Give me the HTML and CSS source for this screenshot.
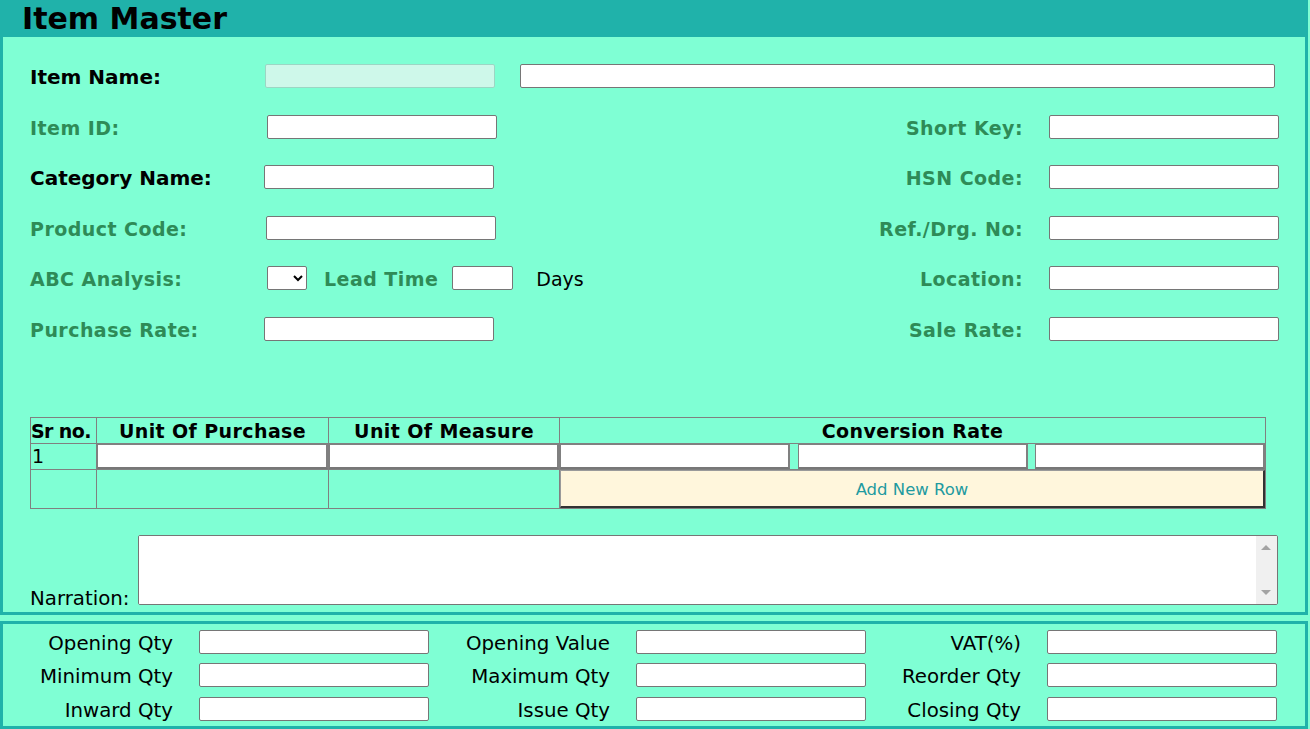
FILE: index.html
```html
<!DOCTYPE html>
<html>
<head>
<meta charset="utf-8">
<title>Item Master</title>
<link rel="stylesheet" href="styles.css">
</head>
<body>
<div class="header"><h1 class="title">Item Master</h1></div>
<div class="panel main-panel">
  <div class="form-grid">
    <label class="lbl lbl-black">Item Name:</label>
    <input class="inp inp-disabled" type="text" disabled>
    <input class="inp inp-wide" type="text">

    <label class="lbl lbl-green">Item ID:</label>
    <input class="inp shift-2" type="text">
    <label class="lbl lbl-green lbl-right">Short Key:</label>
    <input class="inp" type="text">

    <label class="lbl lbl-black">Category Name:</label>
    <input class="inp shift-n1" type="text">
    <label class="lbl lbl-green lbl-right">HSN Code:</label>
    <input class="inp" type="text">

    <label class="lbl lbl-green">Product Code:</label>
    <input class="inp shift-1" type="text">
    <label class="lbl lbl-green lbl-right">Ref./Drg. No:</label>
    <input class="inp" type="text">

    <label class="lbl lbl-green">ABC Analysis:</label>
    <div class="lead-group">
      <select class="sel"><option></option></select>
      <span class="lbl lbl-green lead-lbl">Lead Time</span>
      <input class="inp inp-short" type="text">
      <span class="days">Days</span>
    </div>
    <label class="lbl lbl-green lbl-right">Location:</label>
    <input class="inp" type="text">

    <label class="lbl lbl-green">Purchase Rate:</label>
    <input class="inp shift-n1" type="text">
    <label class="lbl lbl-green lbl-right">Sale Rate:</label>
    <input class="inp" type="text">
  </div>

  <table class="units">
    <colgroup>
      <col class="c-sr"><col class="c-uop"><col class="c-uom"><col class="c-conv">
    </colgroup>
    <thead>
      <tr class="head-row">
        <th>Sr no.</th>
        <th>Unit Of Purchase</th>
        <th>Unit Of Measure</th>
        <th>Conversion Rate</th>
      </tr>
    </thead>
    <tbody>
      <tr class="data-row">
        <td class="sr">1</td>
        <td><input class="cell-inp" type="text"></td>
        <td><input class="cell-inp" type="text"></td>
        <td>
          <div class="conv-inputs">
            <input class="cell-inp conv" type="text">
            <input class="cell-inp conv" type="text">
            <input class="cell-inp conv" type="text">
          </div>
        </td>
      </tr>
      <tr class="btn-row">
        <td></td>
        <td></td>
        <td></td>
        <td class="btn-cell"><button class="add-btn" type="button">Add New Row</button></td>
      </tr>
    </tbody>
  </table>

  <div class="narration">
    <label class="narr-lbl">Narration:</label>
    <div class="narr-box">
      <textarea class="narr-text"></textarea>
      <div class="scrollbar">
        <span class="arrow arrow-up"></span>
        <span class="arrow arrow-down"></span>
      </div>
    </div>
  </div>
</div>

<div class="panel bottom-panel">
  <div class="qty-grid">
    <label class="qlbl">Opening Qty</label><input class="inp" type="text">
    <label class="qlbl">Opening Value</label><input class="inp" type="text">
    <label class="qlbl">VAT(%)</label><input class="inp" type="text">

    <label class="qlbl">Minimum Qty</label><input class="inp" type="text">
    <label class="qlbl">Maximum Qty</label><input class="inp" type="text">
    <label class="qlbl">Reorder Qty</label><input class="inp" type="text">

    <label class="qlbl">Inward Qty</label><input class="inp" type="text">
    <label class="qlbl">Issue Qty</label><input class="inp" type="text">
    <label class="qlbl">Closing Qty</label><input class="inp" type="text">
  </div>
</div>
</body>
</html>
```
FILE: styles.css
```css
* { box-sizing: border-box; }

html, body {
  margin: 0;
  padding: 0;
  background: #7FFFD4;
  font-family: "DejaVu Sans", Verdana, sans-serif;
  color: #000;
}

body { width: 1308px; }

.header {
  background: #20B2AA;
  height: 37px;
  padding-left: 22px;
  display: flex;
  align-items: center;
}

.title {
  margin: 0;
  font-size: 30px;
  font-weight: bold;
  line-height: 1;
}

.panel {
  background: #7FFFD4;
  border: 3px solid #20B2AA;
}

.main-panel {
  border-top: none;
  padding: 27px 26px 7px 27px;
}

.form-grid {
  display: grid;
  grid-template-columns: 235px 230px 1fr 230px;
  grid-template-rows: repeat(6, 24px);
  row-gap: 26.6px;
  align-items: center;
}

.lbl {
  font-weight: bold;
  white-space: nowrap;
  line-height: 24px;
  padding-top: 2px;
}

.lbl-black {
  color: #000;
  font-size: 20px;
}

.lbl-green {
  color: #2E8B57;
  font-size: 19px;
  letter-spacing: 0.45px;
}

.lbl-right {
  justify-self: end;
  padding-right: 26px;
}

.inp {
  height: 24px;
  width: 230px;
  border: 1px solid #767676;
  border-radius: 2px;
  background: #fff;
  padding: 1px 2px;
  font-size: 13px;
}

.inp-disabled {
  background: #CEF8EA;
  border-color: #9CD6C4;
}

.inp-wide {
  grid-column: 3 / 5;
  width: auto;
  margin-left: 25px;
  margin-right: 4px;
}

.shift-2 { margin-left: 2px; }
.shift-1 { margin-left: 1px; }
.shift-n1 { margin-left: -1px; }

.lead-group {
  display: flex;
  align-items: center;
  white-space: nowrap;
  width: 230px;
  overflow: visible;
}

.lead-group > * { flex-shrink: 0; }

.sel {
  width: 40px;
  height: 24px;
  margin-left: 2px;
  border: 1px solid #767676;
  border-radius: 2px;
  background: #fff;
  font-size: 13px;
}

.lead-lbl { margin-left: 17px; }

.inp-short {
  width: 61px;
  margin-left: 14px;
}

.days {
  margin-left: 23px;
  font-size: 19px;
  line-height: 24px;
  padding-top: 2px;
}

.units {
  margin-top: 76px;
  width: 1235px;
  border-collapse: collapse;
  table-layout: fixed;
}

.c-sr { width: 66px; }
.c-uop { width: 232px; }
.c-uom { width: 231px; }
.c-conv { width: 706px; }

.units th,
.units td {
  border: 1px solid #808080;
  padding: 0;
}

.head-row th {
  height: 26px;
  font-weight: bold;
  font-size: 19px;
  letter-spacing: 0.4px;
  text-align: center;
  white-space: nowrap;
  line-height: 24px;
  padding-top: 1px;
}

.head-row th:first-child {
  letter-spacing: -0.6px;
  text-align: left;
}

.data-row td { height: 26px; }

.sr {
  font-size: 19px;
  line-height: 24px;
  padding-left: 1px !important;
}

.cell-inp {
  display: block;
  width: 100%;
  height: 25px;
  border: 1px solid #808080;
  border-bottom: 2px solid #777;
  border-right-width: 2px;
  background: #fff;
  padding: 0 2px;
}

.conv-inputs {
  display: flex;
  justify-content: space-between;
}

.cell-inp.conv { width: 230px; }

.btn-row td { height: 38px; }

.btn-cell { vertical-align: top; }

.add-btn {
  display: block;
  width: 100%;
  height: 38px;
  background: #FFF6DC;
  color: #1F9AA0;
  font-family: "DejaVu Sans", Verdana, sans-serif;
  font-size: 16.5px;
  border: 1px solid #9a9a9a;
  border-right: 2px solid #333;
  border-bottom: 2px solid #333;
  padding: 3px 0 0 0;
  cursor: pointer;
}

.narration {
  display: flex;
  align-items: flex-end;
  margin-top: 26px;
}

.narr-lbl {
  width: 108px;
  font-size: 19.8px;
  line-height: 19px;
  margin-bottom: -3px;
  white-space: nowrap;
}

.narr-box {
  display: flex;
  width: 1140px;
  height: 70px;
  border: 1px solid #767676;
  border-radius: 2px;
  background: #fff;
  overflow: hidden;
}

.narr-text {
  flex: 1;
  border: none;
  outline: none;
  resize: none;
  background: #fff;
  display: block;
}

.scrollbar {
  position: relative;
  width: 21px;
  background: #F0F0F0;
}

.arrow {
  position: absolute;
  left: 5px;
  width: 0;
  height: 0;
  border-left: 5px solid transparent;
  border-right: 5px solid transparent;
}

.arrow-up {
  top: 9px;
  border-bottom: 5px solid #A3A3A3;
}

.arrow-down {
  bottom: 9px;
  border-top: 5px solid #A3A3A3;
}

.bottom-panel {
  margin-top: 6px;
  padding: 6px 0 5px 0;
}

.qty-grid {
  display: grid;
  grid-template-columns: 170px 230px 155px 230px 129px 230px;
  grid-auto-rows: 24px;
  column-gap: 26px;
  row-gap: 9.5px;
  align-items: center;
}

.qlbl {
  text-align: right;
  font-size: 19.8px;
  line-height: 24px;
  padding-top: 4px;
  white-space: nowrap;
}
```
